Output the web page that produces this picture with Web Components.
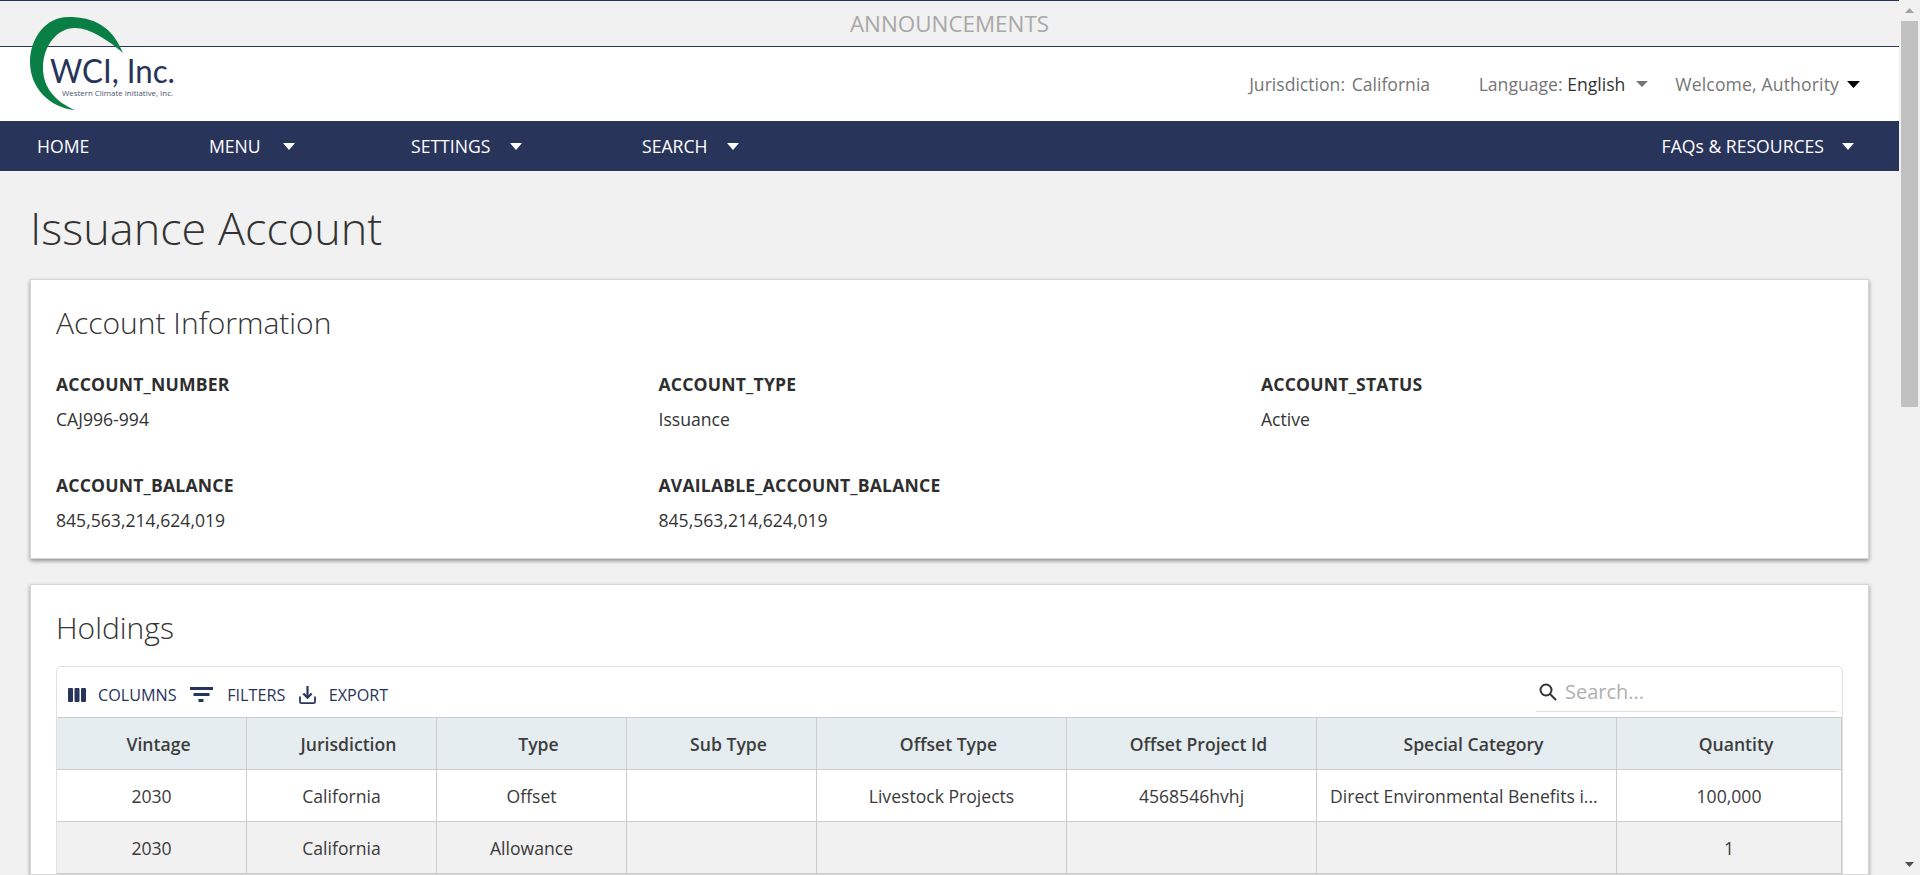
<!DOCTYPE html>
<html lang="en"><head><meta charset="utf-8"><title>Issuance Account</title>
<style>
html,body{margin:0;padding:0;height:875px;overflow:hidden;background:#f1f1f1;font-family:"Open Sans",sans-serif}
</style></head><body>
<wci-app>
  <wci-banner>ANNOUNCEMENTS</wci-banner>
  <wci-header></wci-header>
  <wci-nav>
    <wci-navitem w="172" nocaret>HOME</wci-navitem>
    <wci-navitem w="202" gap="22">MENU</wci-navitem>
    <wci-navitem w="231" gap="20">SETTINGS</wci-navitem>
    <wci-navitem w="200" gap="20">SEARCH</wci-navitem>
    <wci-navitem slot="right" w="0" gap="18">FAQs &amp; RESOURCES</wci-navitem>
  </wci-nav>
  <wci-title>Issuance Account</wci-title>
  <wci-card heading="Account Information" pad="bottom">
    <wci-fields>
      <wci-field label="ACCOUNT_NUMBER">CAJ996-994</wci-field>
      <wci-field label="ACCOUNT_TYPE">Issuance</wci-field>
      <wci-field label="ACCOUNT_STATUS">Active</wci-field>
      <wci-field label="ACCOUNT_BALANCE">845,563,214,624,019</wci-field>
      <wci-field label="AVAILABLE_ACCOUNT_BALANCE">845,563,214,624,019</wci-field>
    </wci-fields>
  </wci-card>
  <wci-card heading="Holdings" style="margin-top:25px"><wci-grid></wci-grid></wci-card>
</wci-app>
<script>
function def(name,css,html,init){
  customElements.define(name,class extends HTMLElement{
    constructor(){super();const r=this.attachShadow({mode:'open'});
      r.innerHTML='<style>'+css+'</style>'+(typeof html==='function'?html(this):html);}
    connectedCallback(){init&&init(this)}
  });
}
const caret=(c,w=13,h=7)=>`<svg width="${w}" height="${h}" viewBox="0 0 13 7" preserveAspectRatio="none" style="display:block;flex:none"><path d="M0 0h13L6.5 7z" fill="${c}"/></svg>`;

def('wci-app',`:host{display:flex;height:875px;overflow:hidden;color:#333}
.main{flex:1;min-width:0;overflow:hidden;display:flex;flex-direction:column}
.sb{width:21px;flex:none;background:#f1f1f1;display:flex;flex-direction:column;align-items:center;box-sizing:border-box}
.up,.dn{height:21px;flex:none;display:flex;align-items:center;justify-content:center}
.th{width:17px;height:386px;background:#c1c1c1;flex:none}
.sp{flex:1}`,
`<div class="main"><slot></slot></div><div class="sb"><div class="up"><svg width="9" height="5" viewBox="0 0 9 5"><path d="M0 5h9L4.5 0z" fill="#a3a3a3"/></svg></div><div class="th"></div><div class="sp"></div><div class="dn"><svg width="9" height="5" viewBox="0 0 9 5"><path d="M0 0h9L4.5 5z" fill="#505050"/></svg></div></div>`);

def('wci-banner',`:host{display:block;flex:none;box-sizing:border-box;height:47px;border-top:1px solid #29345b;border-bottom:1px solid #29345b;background:#f1f1f1;color:#a8a8a8;font-size:22.4px;line-height:45px;text-align:center}`,`<slot></slot>`);

def('wci-header',`:host{display:flex;flex:none;position:relative;height:74px;background:#fff;align-items:center;justify-content:flex-end;font-size:17.6px;color:#757575}
.logo{position:absolute;left:29px;top:-31px}
.j{margin-right:48.5px}.j i{font-style:normal;margin-left:6.7px}.l{display:flex;align-items:center;gap:11px;margin-right:27px}.l b{font-weight:400;color:#333}
.w{display:flex;align-items:center;gap:8px;margin-right:39px}.w span{letter-spacing:.14px}
span{line-height:24px}`,
`<svg class="logo" width="150" height="96" viewBox="29 16 150 96">
<path d="M123 53C112 26 94 17 68 17C46 17 30 38 30 62C30 88 50 108 75 110C56 102 43 88 43 68C43 46 57 28 75 28C90 28 108 40 123 53z" fill="#0a7f45"/>
<text x="50" y="83" font-family="'Lato',sans-serif" font-size="32" fill="#29345b" textLength="125" lengthAdjust="spacingAndGlyphs">WCI, Inc.</text>
<text x="62" y="96" font-family="'Open Sans',sans-serif" font-size="7" fill="#4a5370" textLength="111" lengthAdjust="spacingAndGlyphs">Western Climate Initiative, Inc.</text>
</svg>
<span class="j">Jurisdiction:<i>California</i></span>
<span class="l"><span>Language: <b>English</b></span>${caret('#757575',12,6)}</span>
<span class="w"><span>Welcome, Authority</span>${caret('#000',13,7)}</span>`);

def('wci-nav',`:host{display:flex;flex:none;height:50px;background:#29345b;padding-left:37px;padding-right:45px;justify-content:space-between;align-items:center}
.a,.b{display:flex;align-items:center}`,`<div class="a"><slot></slot></div><div class="b"><slot name="right"></slot></div>`);

def('wci-navitem',`:host{display:flex;flex:none;align-items:center;color:#fff;font-size:17.6px;line-height:24px;box-sizing:border-box}`,
e=>`<slot></slot>${e.hasAttribute('nocaret')?'':`<span style="margin-left:${e.getAttribute('gap')}px">${caret('#fff',12,7)}</span>`}`,
e=>{const w=+e.getAttribute('w');if(w)e.style.width=w+'px'});

def('wci-title',`:host{display:block;flex:none;box-sizing:border-box;margin:0 0 0 30px;height:108px;padding-top:10px;font-size:45px;font-weight:300;line-height:94px;color:#333}`,`<slot></slot>`);

def('wci-card',`:host{display:block;flex:none;box-sizing:border-box;margin:0 30px;padding:24px 25px 0;background:#fff;border:1px solid #d6d6d6;box-shadow:0 2px 4px rgba(0,0,0,.4)}
:host([pad=bottom]){height:280px}
h2{margin:0;font-size:30px;font-weight:300;line-height:38px;color:#333}`,
e=>`<h2>${e.getAttribute('heading')}</h2><slot></slot>`);

def('wci-fields',`:host{display:grid;grid-template-columns:repeat(3,602.5px);grid-auto-rows:101px;margin-top:30px}`,`<slot></slot>`);
def('wci-field',`:host{display:block;font-size:17.6px;color:#333;line-height:24px}
.k{font-weight:700;display:block;margin-bottom:11px;color:#2e2e2e;letter-spacing:.18px}`,
e=>`<span class="k">${e.getAttribute('label')}</span><slot></slot>`);

const cols=[190,190,190,190,250,250,300,225];
const head=['Vintage','Jurisdiction','Type','Sub Type','Offset Type','Offset Project Id','Special Category','Quantity'];
const rows=[['2030','California','Offset','','Livestock Projects','4568546hvhj','Direct Environmental Benefits i...','100,000'],['2030','California','Allowance','','','','','1']];
def('wci-grid',`:host{display:block;margin-top:19px;border:1px solid #e0e0e0;border-bottom:0;border-radius:5px 5px 0 0;box-sizing:border-box;width:1787px;color:#333}
.tb{height:50px;box-sizing:border-box;padding-top:5px;display:flex;align-items:center;color:#29345b;font-size:16.2px}
.btn{display:flex;align-items:center}
.s{margin-left:auto;margin-right:5px;margin-top:-5px;width:301px;height:45px;align-self:flex-start;box-sizing:border-box;border-bottom:1px solid #e0e0e0;display:flex;align-items:center;padding:5px 3px 0 3px;gap:8px;font-size:20px;color:#b0b0b0}
.t{display:grid;grid-template-columns:${cols.join('px ')}px;}
.c{box-sizing:border-box;height:52px;border-right:1px solid #ccc;border-bottom:1px solid #ccc;font-size:17.6px;display:flex;align-items:center;justify-content:center;padding:0 13px;white-space:nowrap;color:#3a3a3a;min-width:0}
.h{height:53px;background:#e5edf0;border-top:1px solid #ccc;font-weight:600;color:#3d3d3d;padding-left:27px}
.alt{background:#f1f1f1}`,
()=>`<div class="tb">
<span class="btn" style="margin-left:10.5px"><svg width="18" height="14" viewBox="0 0 18 14" fill="#29345b"><rect width="5" height="14" rx="1"/><rect x="6.5" width="5" height="14" rx="1"/><rect x="13" width="5" height="14" rx="1"/></svg><span style="margin-left:12.5px">COLUMNS</span></span>
<span class="btn" style="margin-left:13px"><svg width="23" height="15" viewBox="0 0 23 15" fill="#29345b"><path d="M0 0h23v3H0zM3.5 6h16v3h-16zM8.5 12h5v3h-5z"/></svg><span style="margin-left:14.5px">FILTERS</span></span>
<span class="btn" style="margin-left:13.4px"><svg width="17" height="18" viewBox="0 0 17 18" fill="none" stroke="#29345b" stroke-width="1.8"><path d="M1 10.5v5.2a1.4 1.4 0 0 0 1.4 1.4h12.2a1.4 1.4 0 0 0 1.4-1.4v-5.2" /><path d="M8.5 0v11" stroke-width="2.2"/><path d="M4.3 7.5l4.2 4.2 4.2-4.2" stroke-width="2.2"/></svg><span style="margin-left:13px">EXPORT</span></span>
<div class="s"><svg width="18" height="18" viewBox="0 0 18 18" fill="none" stroke="#333" stroke-width="2"><circle cx="7" cy="7" r="5.5"/><path d="M11 11l6 6"/></svg><span>Search...</span></div></div>
<div class="t">${head.map(h=>`<div class="c h">${h}</div>`).join('')}
${rows.map((r,k)=>r.map((v,i)=>`<div class="c ${k?'alt':''}" ${i==6&&v?'style="justify-content:flex-start"':''}>${v}</div>`).join('')).join('')}</div>`);
</script></body></html>
